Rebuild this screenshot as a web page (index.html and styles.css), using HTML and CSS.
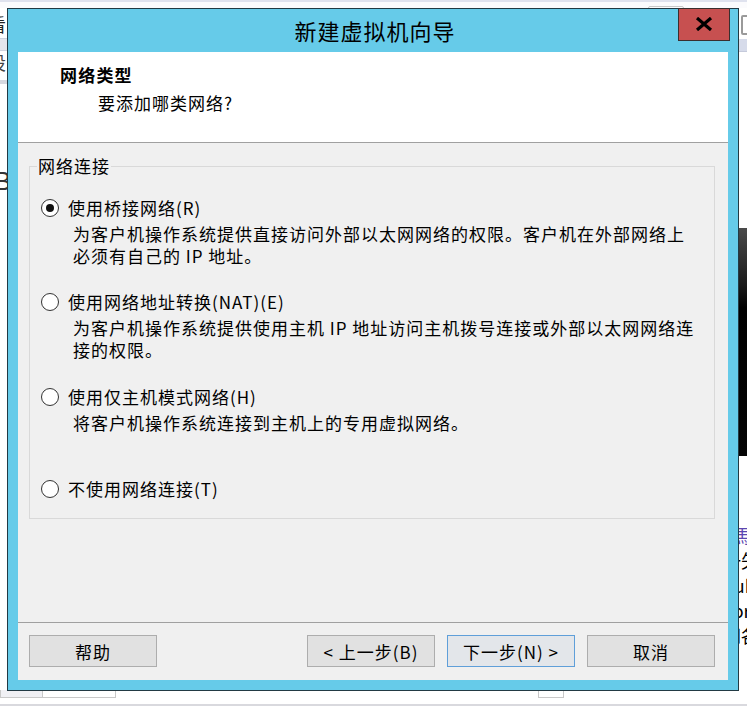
FILE: index.html
```html
<!DOCTYPE html>
<html lang="zh-CN">
<head>
<meta charset="utf-8">
<title>新建虚拟机向导</title>
<link rel="stylesheet" href="styles.css">
</head>
<body>
<div class="desktop">
  <div class="bg-top"><span class="bg-top-box"></span></div>
  <div class="bg-left">
    <span class="bl-char bl-1">看</span>
    <span class="bl-band"></span>
    <span class="bl-char bl-2">设</span>
    <span class="bl-line"></span>
    <span class="bl-big">B</span>
  </div>
  <div class="bg-right">
    <span class="br-icon"></span>
    <span class="br-band"></span>
    <span class="br-dark"></span>
    <div class="br-text">
      <span class="br-purple">1馬</span>
      <span>一矢</span>
      <span>Sub</span>
      <span>For</span>
      <span>网各</span>
    </div>
  </div>
  <div class="bg-bottom">
    <span class="bb-cell bb-c1"></span>
    <span class="bb-cell bb-c2"></span>
    <span class="bb-cell bb-c3"></span>
  </div>

  <div class="window">
    <div class="titlebar">
      <span class="title">新建虚拟机向导</span>
      <button class="close" type="button" aria-label="关闭">
        <svg width="18" height="14" viewBox="0 0 18 14"><path d="M2 1 L16 13 M16 1 L2 13" stroke="#000" stroke-width="3.2" fill="none"/></svg>
      </button>
    </div>
    <div class="client">
      <div class="header">
        <div class="h-title">网络类型</div>
        <div class="h-sub">要添加哪类网络?</div>
      </div>
      <div class="body">
        <fieldset class="group">
          <legend>网络连接</legend>
          <div class="option">
            <div class="opt-label"><span class="radio checked"></span>使用桥接网络(R)</div>
            <div class="opt-desc">为客户机操作系统提供直接访问外部以太网网络的权限。客户机在外部网络上<br>必须有自己的 IP 地址。</div>
          </div>
          <div class="option opt-2">
            <div class="opt-label"><span class="radio"></span>使用网络地址转换(NAT)(E)</div>
            <div class="opt-desc">为客户机操作系统提供使用主机 IP 地址访问主机拨号连接或外部以太网网络连<br>接的权限。</div>
          </div>
          <div class="option opt-3">
            <div class="opt-label"><span class="radio"></span>使用仅主机模式网络(H)</div>
            <div class="opt-desc">将客户机操作系统连接到主机上的专用虚拟网络。</div>
          </div>
          <div class="option opt-4">
            <div class="opt-label"><span class="radio"></span>不使用网络连接(T)</div>
          </div>
        </fieldset>
      </div>
      <div class="footer">
        <button class="btn" type="button">帮助</button>
        <span class="spacer"></span>
        <button class="btn" type="button">&lt; 上一步(B)</button>
        <button class="btn btn-default" type="button">下一步(N) &gt;</button>
        <button class="btn" type="button">取消</button>
      </div>
    </div>
  </div>
</div>
</body>
</html>
```
FILE: styles.css
```css
* { box-sizing: border-box; }
html, body { margin: 0; padding: 0; }
body {
  font-family: "Noto Sans CJK SC", "Microsoft YaHei", sans-serif;
  color: #000;
  background: #fff;
}
.desktop {
  position: relative;
  width: 747px;
  height: 706px;
  overflow: hidden;
  background: #fff;
}

/* background windows (behind the dialog) */
.bg-top {
  position: absolute; left: 0; top: 0; width: 747px; height: 8px;
  border-top: 2px solid #dfe2ee;
  background: #fbfbfd;
}
.bg-top-box {
  position: absolute; left: 648px; top: 4px; width: 36px; height: 8px;
  border: 1px solid #c8c8c8; border-radius: 2px;
}
.bg-left {
  position: absolute; left: 0; top: 8px; width: 8px; height: 682px;
  background: #fff;
  overflow: hidden;
}
.bl-char { position: absolute; left: -12px; font-size: 18px; line-height: 20px; color: #222; }
.bl-1 { top: 6px; }
.bl-band { position: absolute; left: 0; top: 30px; width: 8px; height: 13px; background: #e4e6ec; border-top: 1px solid #cfd3de; border-bottom: 1px solid #cfd3de; }
.bl-2 { top: 44px; color: #444; }
.bl-line { position: absolute; left: 0; top: 72px; width: 8px; height: 4px; background: #d7d9e0; }
.bl-big { position: absolute; left: -6px; top: 158px; font-size: 26px; line-height: 30px; color: #333; font-family: "Liberation Sans", sans-serif; }

.bg-right {
  position: absolute; left: 737px; top: 8px; width: 10px; height: 682px;
  overflow: hidden;
  background: #fff;
}
.br-icon { position: absolute; left: 4px; top: 7px; width: 10px; height: 20px; border: 2px solid #9a9a9a; border-radius: 2px; }
.br-band { position: absolute; left: 0; top: 31px; width: 10px; height: 13px; background: #d6dbea; border-bottom: 1px solid #c5cadb; }
.br-dark { position: absolute; left: 0; top: 220px; width: 10px; height: 228px; background: linear-gradient(#4a4a4a 0%, #1a1a1a 25%, #000 35%, #050505 100%); }
.br-text {
  position: absolute; left: -14px; top: 515px;
  display: flex; flex-direction: column;
  font-size: 18px; line-height: 25px; white-space: nowrap;
}
.br-purple { color: #5b46b0; }

.bg-bottom {
  position: absolute; left: 0; top: 690px; width: 747px; height: 16px;
  background: #fff;
  border-bottom: 2px solid #d9d9de;
}
.bb-cell { position: absolute; top: 0; height: 8px; border: 1px solid #c8c8c8; border-top: none; background: #fff; }
.bb-c1 { left: 0; width: 116px; background: #f0f0f4; }
.bb-c2 { left: 42px; width: 74px; }
.bb-c3 { left: 538px; width: 26px; }

/* dialog window */
.window {
  position: absolute;
  left: 7px; top: 8px;
  width: 732px; height: 683px;
  border: 1px solid #223a44;
  background: #66cbe9;
  padding: 0 10px 10px 10px;
  display: flex;
  flex-direction: column;
}
.titlebar {
  height: 43px;
  flex: none;
  display: flex;
  align-items: center;
  justify-content: center;
}
.title {
  font-size: 22px;
  letter-spacing: 1px;
  line-height: 43px;
  padding-left: 4px;
}
.close {
  position: absolute;
  top: -1px;
  left: 670px;
  width: 52px;
  height: 33px;
  margin: 0; padding: 0;
  border: 1px solid #3a2f2f;
  background: #c75050;
  display: flex;
  align-items: center;
  justify-content: center;
}
.close svg { display: block; margin-top: -1px; }

.client {
  flex: 1;
  display: flex;
  flex-direction: column;
  background: #f0f0f0;
  font-size: 17px;
  letter-spacing: 1px;
}
.header {
  height: 91px;
  flex: none;
  background: #fff;
  border-bottom: 1px solid #a0a0a0;
  padding: 11px 0 0 42px;
}
.h-title { font-weight: bold; line-height: 24px; letter-spacing: 1.2px; }
.h-sub { line-height: 24px; margin-top: 4px; padding-left: 38px; }

.body {
  flex: 1;
  padding: 11px 13px 0 11px;
}
.group {
  margin: 0;
  border: 1px solid #d9d9d9;
  padding: 18px 11px 17px 11px;
  min-width: 0;
}
.group legend {
  padding: 0 1px;
  margin-left: -4px;
  line-height: 24px;
}
.option { display: flex; flex-direction: column; }
.opt-2 { margin-top: 23px; }
.opt-3 { margin-top: 24px; }
.opt-4 { margin-top: 43px; }
.opt-label {
  display: flex;
  align-items: center;
  gap: 9px;
  line-height: 24px;
}
.radio {
  width: 18px; height: 18px;
  flex: none;
  border: 1px solid #333;
  border-radius: 50%;
  background: #fff;
  display: flex;
  align-items: center;
  justify-content: center;
}
.radio.checked::after {
  content: "";
  width: 8px; height: 8px;
  border-radius: 50%;
  background: #111;
}
.opt-desc {
  margin-top: 3px;
  margin-left: 32px;
  line-height: 22px;
  white-space: nowrap;
}

.footer {
  height: 58px;
  flex: none;
  border-top: 1px solid #a0a0a0;
  padding: 12px 13px 0 11px;
  display: flex;
  align-items: flex-start;
  gap: 12px;
}
.spacer { flex: 1; }
.btn {
  width: 128px;
  height: 32px;
  margin: 0;
  padding: 0;
  border: 1px solid #adadad;
  background: #e1e1e1;
  font-family: inherit;
  font-size: 17px;
  letter-spacing: 1px;
  color: #000;
}
.btn-default {
  border-color: #5f9fd9;
  background: #e3e6ea;
}
```
